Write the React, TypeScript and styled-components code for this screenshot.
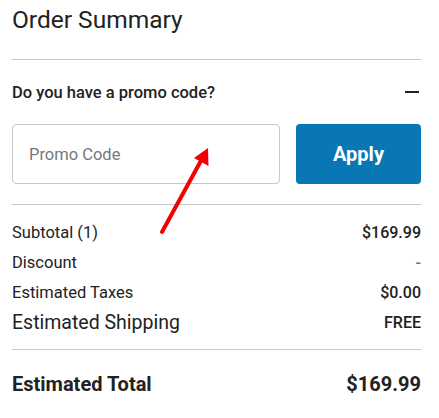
import styled, { createGlobalStyle } from 'styled-components'

const GlobalStyle = createGlobalStyle`
    body {
        margin: 0;
        background: #fff;
        font-family: Roboto, 'Liberation Sans', sans-serif;
        color: #222;
    }
`

const rows = [
    { label: 'Subtotal (1)', value: '$169.99' },
    { label: 'Discount', value: '-', green: true },
    { label: 'Estimated Taxes', value: '$0.00' },
    { label: 'Estimated Shipping', value: 'FREE', large: true },
]

export default function App() {
    return (
        <>
            <GlobalStyle />
            <Container>
                <Title>Order Summary</Title>
                <Divider />
                <PromoHeader>
                    <PromoQuestion>Do you have a promo code?</PromoQuestion>
                    <Minus />
                </PromoHeader>
                <PromoForm>
                    <PromoInput placeholder='Promo Code' />
                    <ApplyButton>Apply</ApplyButton>
                </PromoForm>
                <Divider $top={20} />
                <Rows>
                    {rows.map((row) => (
                        <Row key={row.label}>
                            <Label $large={row.large}>{row.label}</Label>
                            <Value $green={row.green}>{row.value}</Value>
                        </Row>
                    ))}
                </Rows>
                <Divider $top={12} />
                <TotalRow>
                    <span>Estimated Total</span>
                    <span>$169.99</span>
                </TotalRow>
                <Arrow width='60' height='100' viewBox='0 0 60 100'>
                    <line x1='8' y1='92' x2='49' y2='17' stroke='#f30000' strokeWidth='4' strokeLinecap='round' />
                    <polygon points='54,8 54.5,26 40,18' fill='#f30000' />
                </Arrow>
            </Container>
        </>
    )
}

const Container = styled.div`
    position: relative;
    width: 409px;
    padding: 5px 18px 0 12px;
`

const Title = styled.h1`
    margin: 0 0 24px;
    font-size: 24.5px;
    line-height: 30px;
    font-weight: 400;
    color: #222;
`

const Divider = styled.hr<{ $top?: number }>`
    margin: ${(p) => p.$top ?? 0}px 0 0;
    border: 0;
    border-top: 1px solid #c8c8c8;
`

const PromoHeader = styled.div`
    display: flex;
    align-items: center;
    justify-content: space-between;
    height: 64px;
`

const PromoQuestion = styled.span`
    font-size: 16.5px;
    font-weight: 500;
    color: #222;
`

const Minus = styled.span`
    width: 14px;
    height: 2px;
    margin-right: 2px;
    background: #222;
`

const PromoForm = styled.div`
    display: flex;
    gap: 16px;
    height: 60px;
`

const PromoInput = styled.input`
    flex: 0 0 268px;
    box-sizing: border-box;
    height: 60px;
    padding: 0 16px;
    border: 1px solid #c8c8c8;
    border-radius: 4px;
    font-family: Roboto, 'Liberation Sans', sans-serif;
    font-size: 16.5px;
    color: #222;
    outline: none;
    &::placeholder {
        color: #777;
    }
`

const ApplyButton = styled.button`
    flex: 1;
    height: 60px;
    border: 0;
    border-radius: 4px;
    background: #0877b4;
    color: #fff;
    font-family: Roboto, 'Liberation Sans', sans-serif;
    font-size: 20px;
    font-weight: 700;
    cursor: pointer;
`

const Rows = styled.div`
    display: flex;
    flex-direction: column;
    margin-top: 12px;
    margin-bottom: 12px;
`

const Row = styled.div`
    display: flex;
    align-items: center;
    justify-content: space-between;
    height: 30px;
`

const Label = styled.span<{ $large?: boolean }>`
    font-size: ${(p) => (p.$large ? '19.5px' : '16.5px')};
    color: #222;
`

const Value = styled.span<{ $green?: boolean }>`
    font-size: 16px;
    font-weight: 500;
    color: ${(p) => (p.$green ? '#2f9e44' : '#222')};
`

const TotalRow = styled.div`
    display: flex;
    align-items: center;
    justify-content: space-between;
    height: 30px;
    margin-top: 19px;
    font-size: 20px;
    font-weight: 700;
    color: #222;
`

const Arrow = styled.svg`
    position: absolute;
    left: 154px;
    top: 140px;
    pointer-events: none;
`
